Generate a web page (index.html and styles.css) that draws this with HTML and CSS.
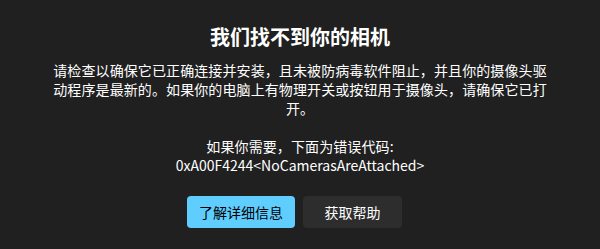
FILE: index.html
```html
<!DOCTYPE html>
<html lang="zh-CN">
<head>
<meta charset="UTF-8">
<title>相机</title>
<link rel="stylesheet" href="styles.css">
</head>
<body>
<div class="error-page">
  <h1>我们找不到你的相机</h1>
  <p class="message">请检查以确保它已正确连接并安装，且未被防病毒软件阻止，并且你的摄像头驱动程序是最新的。如果你的电脑上有物理开关或按钮用于摄像头，请确保它已打开。</p>
  <p class="code">如果你需要，下面为错误代码:<br><span class="code-id">0xA00F4244&lt;NoCamerasAreAttached&gt;</span></p>
  <div class="actions">
    <button class="btn primary">了解详细信息</button>
    <button class="btn secondary">获取帮助</button>
  </div>
</div>
</body>
</html>
```

FILE: styles.css
```css
body {
  margin: 0;
  background-color: #202020;
  color: #fff;
  font-family: "Noto Sans CJK SC", "Noto Sans", sans-serif;
}
.error-page {
  display: flex;
  flex-direction: column;
  align-items: center;
  padding-top: 23px;
  text-align: center;
}
h1 {
  margin: 0;
  font-size: 20px;
  line-height: 28px;
  font-weight: bold;
}
.message,
.code {
  width: 496px;
  margin: 0;
  font-size: 14px;
  line-height: 19px;
  letter-spacing: 0.1px;
}
.message {
  margin-top: 10px;
}
.code {
  margin-top: 19px;
}
.code-id {
  letter-spacing: 0;
}
.actions {
  display: flex;
  gap: 8px;
  margin-top: 21px;
  padding-right: 11px;
}
.btn {
  height: 32px;
  padding: 0 12px;
  border: none;
  border-radius: 4px;
  font-family: inherit;
  font-size: 14px;
  cursor: pointer;
}
.primary {
  background-color: #60cdff;
  color: #000;
}
.secondary {
  min-width: 99px;
  background-color: #2d2d2d;
  color: #fff;
}
```
